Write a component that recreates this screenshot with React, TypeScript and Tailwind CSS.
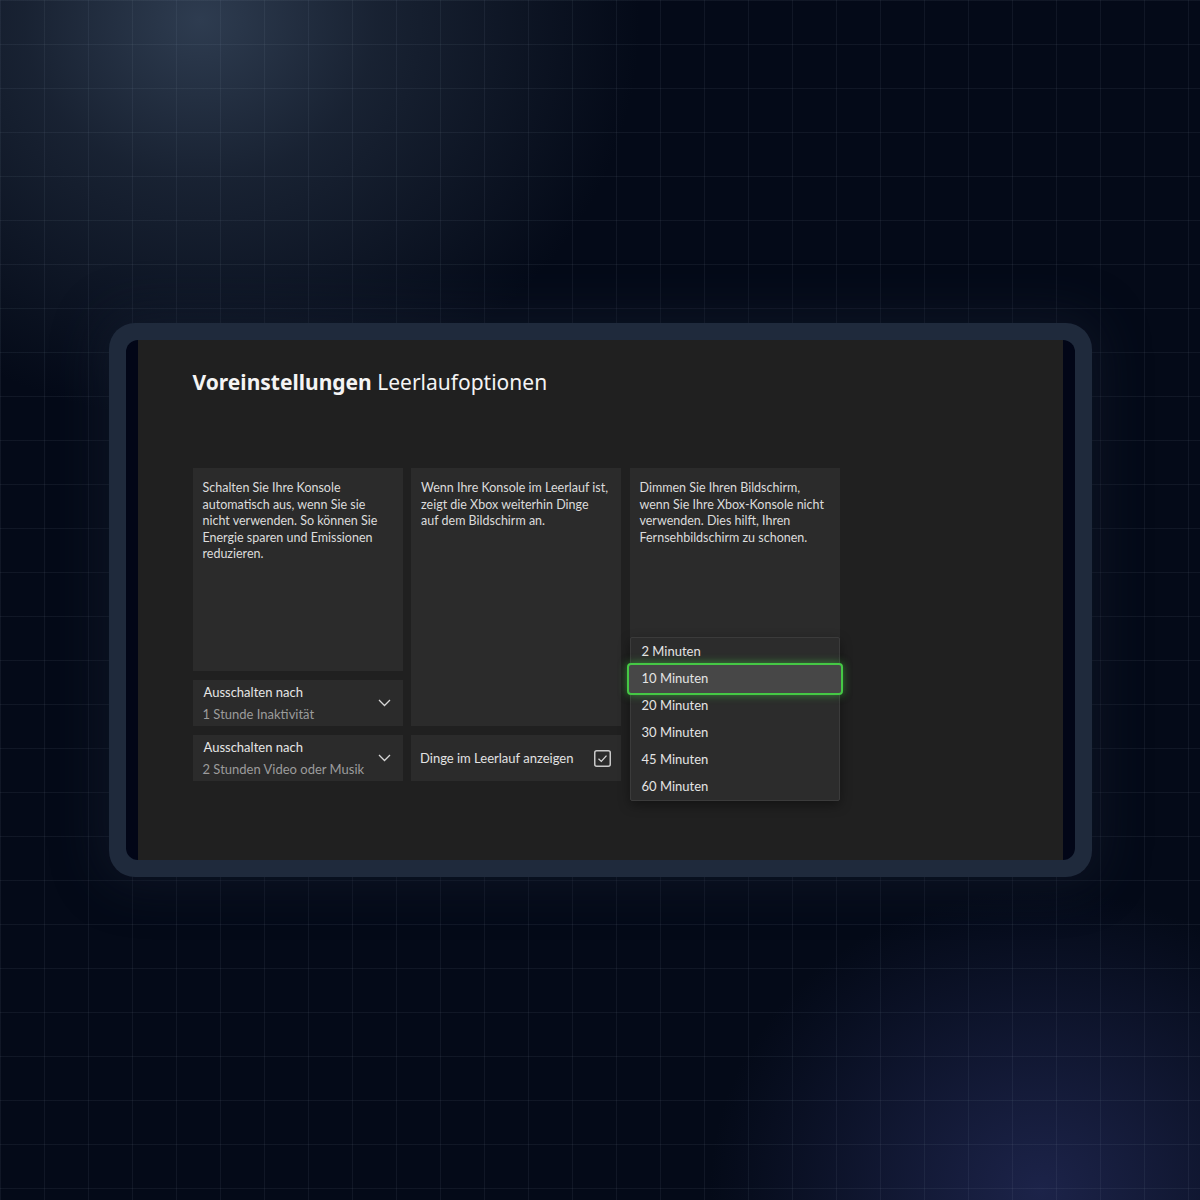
import React from 'react';

const minutes = ['2 Minuten', '10 Minuten', '20 Minuten', '30 Minuten', '45 Minuten', '60 Minuten'];

const Chevron = () => (
    <svg width="13" height="8" viewBox="0 0 13 8" fill="none" className="shrink-0">
        <polyline points="1,1 6.5,6.5 12,1" stroke="#d6d6d6" strokeWidth="1.3" />
    </svg>
);

const DropdownRow = ({ label, value }: { label: string; value: string }) => (
    <div className="h-[46px] bg-[#2b2b2b] flex items-center justify-between pl-[11px] pr-[12px]">
        <div className="flex flex-col leading-[22px]">
            <span className="text-[13px] text-[#e6e6e6]">{label}</span>
            <span className="text-[13px] text-[#9c9c9c] -ml-[1px]">{value}</span>
        </div>
        <Chevron />
    </div>
);

export default function App() {
    return (
        <div
            className="w-[1200px] h-[1200px] overflow-hidden flex items-center justify-center bg-[#040a18] bg-[linear-gradient(rgba(148,163,184,0.085)_1px,transparent_1px),linear-gradient(90deg,rgba(148,163,184,0.085)_1px,transparent_1px),radial-gradient(ellipse_440px_400px_at_200px_20px,#2e3c50_0%,rgba(38,50,68,0.6)_40%,rgba(38,50,68,0)_100%),radial-gradient(ellipse_330px_300px_at_1040px_1190px,#1c2349_0%,rgba(28,35,73,0)_100%)] bg-[size:44px_44px,44px_44px,100%_100%,100%_100%]"
            style={{ fontFamily: 'Lato, "Noto Sans", sans-serif' }}
        >
            {/* console frame */}
            <div className="w-[983px] h-[554px] rounded-[26px] bg-[#1f2a3c] p-[17px] shadow-[0_0_50px_8px_rgba(24,34,52,0.45)]">
                <div className="h-full rounded-[12px] bg-[#020617] px-[12px]">
                    <div className="h-full bg-[#202020] pl-[55px] pt-[26px]">
                        <h1
                            className="text-[21px] leading-[32px] text-[#f4f4f4]"
                            style={{ fontFamily: '"Noto Sans", sans-serif' }}
                        >
                            <span className="font-bold">Voreinstellungen</span>{' '}
                            <span className="font-normal">Leerlaufoptionen</span>
                        </h1>

                        <div className="mt-[70px] grid grid-cols-[210px_210px_210px] gap-x-[8.5px] text-[12.5px] leading-[16.5px] text-[#dcdcdc]">
                            {/* column 1 */}
                            <div className="flex flex-col gap-[9px]">
                                <div className="h-[203px] bg-[#2b2b2b] pl-[10px] pr-[12.5px] pt-[12px]">
                                    Schalten Sie Ihre Konsole automatisch aus, wenn Sie sie nicht verwenden. So können Sie Energie sparen und Emissionen reduzieren.
                                </div>
                                <DropdownRow label="Ausschalten nach" value="1 Stunde Inaktivität" />
                                <DropdownRow label="Ausschalten nach" value="2 Stunden Video oder Musik" />
                            </div>

                            {/* column 2 */}
                            <div className="flex flex-col gap-[9px]">
                                <div className="h-[258px] bg-[#2b2b2b] pl-[10px] pr-[12.5px] pt-[12px]">
                                    Wenn Ihre Konsole im Leerlauf ist, zeigt die Xbox weiterhin Dinge auf dem Bildschirm an.
                                </div>
                                <div className="h-[46px] bg-[#2b2b2b] flex items-center justify-between pl-[9px] pr-[10px] text-[13px]">
                                    <span className="text-[#e2e2e2]">Dinge im Leerlauf anzeigen</span>
                                    <svg width="17" height="17" viewBox="0 0 17 17" fill="none">
                                        <rect x="0.75" y="0.75" width="15.5" height="15.5" rx="2" stroke="#c9c9c9" strokeWidth="1.5" />
                                        <polyline points="4.5,8.8 7.3,11.4 12.5,5.6" stroke="#d8d8d8" strokeWidth="1.3" />
                                    </svg>
                                </div>
                            </div>

                            {/* column 3 */}
                            <div className="relative">
                                <div className="h-[258px] bg-[#2b2b2b] pl-[10px] pr-[12.5px] pt-[12px]">
                                    Dimmen Sie Ihren Bildschirm, wenn Sie Ihre Xbox-Konsole nicht verwenden. Dies hilft, Ihren Fernsehbildschirm zu schonen.
                                </div>
                                <div className="absolute left-0 right-0 top-[169px] bg-[#2c2c2c] border border-[#3b3b3b] rounded-[2px] shadow-[0_4px_12px_rgba(0,0,0,0.4)] text-[13px]">
                                    {minutes.map((m) => (
                                        <div key={m} className="relative h-[27px] flex items-center pl-[11px] text-[#e4e4e4]">
                                            {m === '10 Minuten' && (
                                                <div className="absolute -left-[4px] -right-[4px] -top-[2px] -bottom-[3px] rounded-[4px] bg-[#474747] border-2 border-[#45c845] shadow-[0_0_8px_rgba(70,210,70,0.55)]" />
                                            )}
                                            <span className="relative">{m}</span>
                                        </div>
                                    ))}
                                </div>
                            </div>
                        </div>
                    </div>
                </div>
            </div>
        </div>
    );
}
